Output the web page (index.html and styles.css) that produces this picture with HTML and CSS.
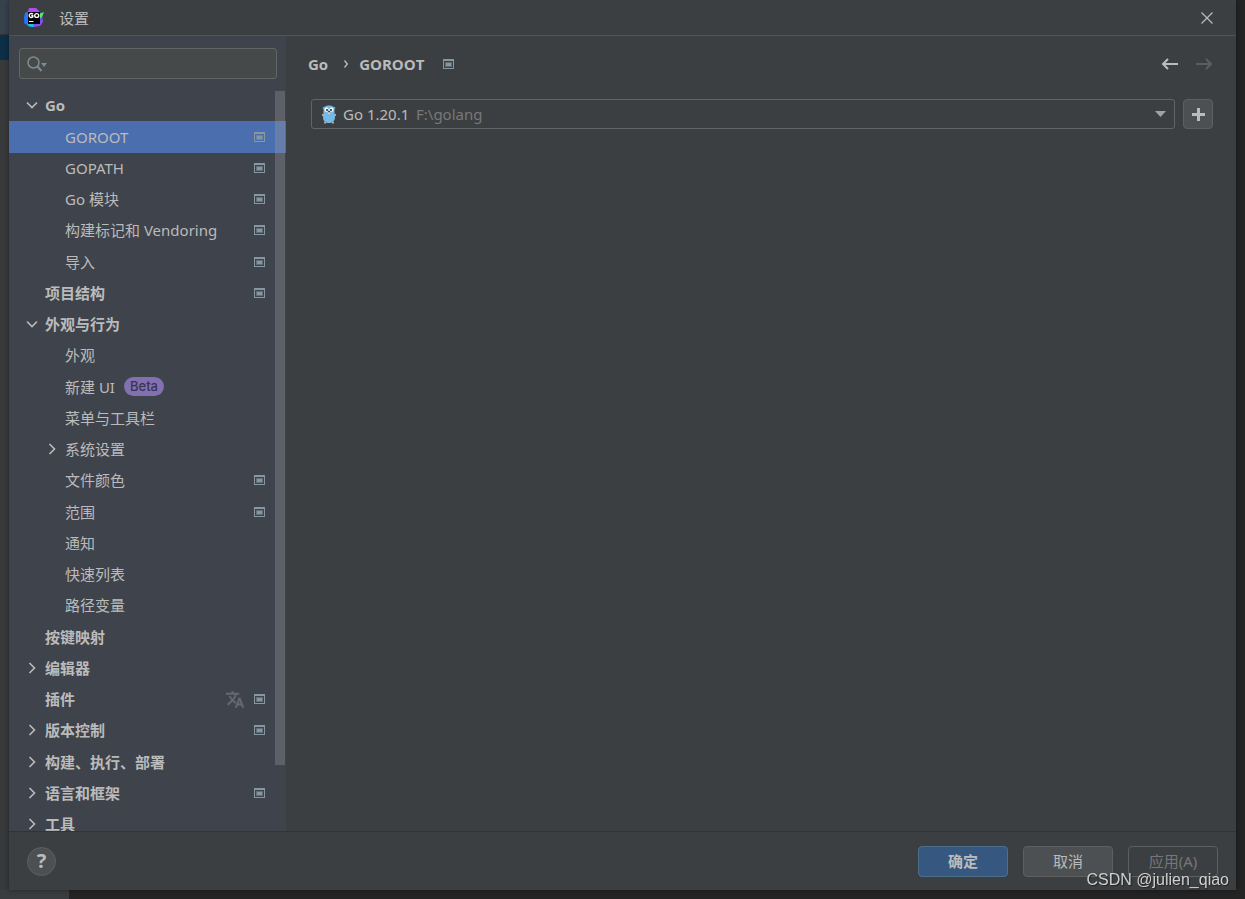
FILE: index.html
```html
<!DOCTYPE html>
<html lang="zh-CN">
<head>
<meta charset="utf-8">
<title>设置</title>
<link rel="stylesheet" href="styles.css">
</head>
<body>
<svg class="defs" aria-hidden="true">
  <symbol id="project" viewBox="0 0 11 10"><path fill="currentColor" fill-rule="evenodd" d="M0 0h11v10H0zM1 2v7h9V2z"/><path fill="currentColor" opacity=".5" d="M2 3h7v5H2z"/><path fill="currentColor" d="M3 4h5v3H3z"/></symbol>
  <symbol id="down" viewBox="0 0 12 12"><path fill="none" stroke="currentColor" stroke-width="1.600" d="M1 3.500l5 5 5-5"/></symbol>
  <symbol id="right" viewBox="0 0 12 12"><path fill="none" stroke="currentColor" stroke-width="1.600" d="M3.500 1l5 5-5 5"/></symbol>
</svg>
<div class="desktop">
  <div class="edge-left"><div class="edge-tab"></div><div class="edge-active"></div></div>
  <div class="dialog" role="dialog" aria-labelledby="title">
    <header class="titlebar">
      <svg class="app-icon" viewBox="0 0 20 20" aria-hidden="true">
        <defs><linearGradient id="g" x1="0" y1="0" x2="1" y2="1"><stop offset="0" stop-color="#2a9df4"/><stop offset=".5" stop-color="#3d5bf5"/><stop offset="1" stop-color="#b345f1"/></linearGradient></defs>
        <path fill="url(#g)" d="M1 5l5-2 9 0 3 3 1 8-3 4-6 1-6-1-4-3 1-5z"/>
        <path fill="#b04af5" d="M5 0h7l3 3-1 3H3z"/>
        <path fill="#1e7bff" d="M1 5h4v9H1L0 10z"/>
        <path fill="#11c9dc" d="M3 15h6l1 4-5-.5z"/>
        <path fill="#57f05a" d="M15 6l5-2-2 5-3 2z"/>
        <path fill="#000" d="M4 4h12v12H4z"/>
        <path fill="none" stroke="#fff" stroke-width="1.400" d="M9 6.200C7.500 5 5.200 5.600 5.200 7.500s2 2.600 3.600 1.500V7.700H7.300"/>
        <ellipse cx="12.700" cy="7.500" rx="2" ry="1.900" fill="none" stroke="#fff" stroke-width="1.400"/>
        <path fill="#fff" d="M5 13h4.500v1H5z"/>
      </svg>
      <h1 id="title" class="title">设置</h1>
      <button class="close" type="button" aria-label="关闭"><svg viewBox="0 0 12 12"><path fill="none" stroke="currentColor" stroke-width="1.200" d="M.5.500l11 11M11.500.500l-11 11"/></svg></button>
    </header>
    <div class="body">
      <aside class="sidebar">
        <label class="search">
          <svg class="search-icon" viewBox="0 0 21 16" aria-hidden="true"><circle cx="6.500" cy="6.500" r="5.500" fill="none" stroke="currentColor" stroke-width="1.500"/><path stroke="currentColor" stroke-width="2" d="M10.500 10.500l4 4.500"/><path fill="currentColor" d="M14 7h6l-3 4z"/></svg>
          <input class="search-input" type="text" aria-label="搜索设置">
        </label>
        <div class="tree-wrap">
          <ul class="tree">
            <li class="row top"><svg class="chev"><use href="#down"/></svg><button class="name" type="button">Go</button></li>
            <li class="row selected"><button class="name" type="button">GOROOT</button><svg class="proj"><use href="#project"/></svg></li>
            <li class="row"><button class="name" type="button">GOPATH</button><svg class="proj"><use href="#project"/></svg></li>
            <li class="row"><button class="name" type="button">Go 模块</button><svg class="proj"><use href="#project"/></svg></li>
            <li class="row"><button class="name" type="button">构建标记和 Vendoring</button><svg class="proj"><use href="#project"/></svg></li>
            <li class="row"><button class="name" type="button">导入</button><svg class="proj"><use href="#project"/></svg></li>
            <li class="row top"><button class="name" type="button">项目结构</button><svg class="proj"><use href="#project"/></svg></li>
            <li class="row top"><svg class="chev"><use href="#down"/></svg><button class="name" type="button">外观与行为</button></li>
            <li class="row"><button class="name" type="button">外观</button></li>
            <li class="row"><button class="name" type="button">新建 UI</button><span class="badge">Beta</span></li>
            <li class="row"><button class="name" type="button">菜单与工具栏</button></li>
            <li class="row"><svg class="chev"><use href="#right"/></svg><button class="name" type="button">系统设置</button></li>
            <li class="row"><button class="name" type="button">文件颜色</button><svg class="proj"><use href="#project"/></svg></li>
            <li class="row"><button class="name" type="button">范围</button><svg class="proj"><use href="#project"/></svg></li>
            <li class="row"><button class="name" type="button">通知</button></li>
            <li class="row"><button class="name" type="button">快速列表</button></li>
            <li class="row"><button class="name" type="button">路径变量</button></li>
            <li class="row top"><button class="name" type="button">按键映射</button></li>
            <li class="row top"><svg class="chev"><use href="#right"/></svg><button class="name" type="button">编辑器</button></li>
            <li class="row top"><button class="name" type="button">插件</button><svg class="lang" viewBox="1 2 22 20"><path fill="currentColor" stroke="currentColor" stroke-width=".6" d="M12.870 15.070l-2.540-2.510.03-.03A17.500 17.500 0 0 0 14.070 6H17V4h-7V2H8v2H1v2h11.170A15.700 15.700 0 0 1 9 11.350 15.600 15.600 0 0 1 6.690 8h-2a17.600 17.600 0 0 0 2.980 4.560l-5.090 5.020L4 19l5-5 3.110 3.110zM18.500 10h-2L12 22h2l1.120-3h4.750L21 22h2zm-2.620 7l1.620-4.330L19.120 17z"/></svg><svg class="proj"><use href="#project"/></svg></li>
            <li class="row top"><svg class="chev"><use href="#right"/></svg><button class="name" type="button">版本控制</button><svg class="proj"><use href="#project"/></svg></li>
            <li class="row top"><svg class="chev"><use href="#right"/></svg><button class="name" type="button">构建、执行、部署</button></li>
            <li class="row top"><svg class="chev"><use href="#right"/></svg><button class="name" type="button">语言和框架</button><svg class="proj"><use href="#project"/></svg></li>
            <li class="row top"><svg class="chev"><use href="#right"/></svg><button class="name" type="button">工具</button></li>
          </ul>
          <div class="thumb"></div>
        </div>
      </aside>
      <main class="content">
        <div class="heading">
          <nav class="crumbs" aria-label="位置">
            <span>Go</span>
            <svg class="crumb-sep" viewBox="0 0 4 8"><path fill="none" stroke="currentColor" stroke-width="1.300" d="M.5.500L3.300 4 .5 7.500"/></svg>
            <span>GOROOT</span>
            <svg class="crumb-proj"><use href="#project"/></svg>
          </nav>
          <button class="nav" type="button" aria-label="后退"><svg viewBox="0 0 17 12"><path fill="none" stroke="currentColor" stroke-width="2" d="M17 6H2M7 1L2 6l5 5"/></svg></button>
          <button class="nav" type="button" aria-label="前进" disabled><svg viewBox="0 0 17 12"><path fill="none" stroke="currentColor" stroke-width="2" d="M0 6h15M10 1l5 5-5 5"/></svg></button>
        </div>
        <div class="sdk">
          <div class="combo">
            <svg class="gopher" viewBox="0 0 14 19" aria-hidden="true">
              <path fill="#c9a58a" d="M0 9h2v2H0zM12 9h2v2h-2zM2 17h2v1.500H2zM10 17h2v1.500h-2z"/>
              <circle cx="2" cy="3" r="1.300" fill="#5ba3d0"/><circle cx="12" cy="3" r="1.300" fill="#5ba3d0"/>
              <path fill="#75b9e7" d="M1.500 5C1.500 1.500 4 .5 7 .5s5.500 1 5.500 4.500c0 2 0 3 .5 6.500 0 4-1.500 6.500-6 6.500S1 15.500 1 11.500c.5-3.500.5-4.500.5-6.500z"/>
              <circle cx="4.500" cy="4.700" r="2.100" fill="#fff"/><circle cx="9.500" cy="4.700" r="2.100" fill="#fff"/>
              <circle cx="5" cy="5" r="1" fill="#222"/><circle cx="9" cy="5" r="1" fill="#222"/>
              <path fill="#d5b49b" d="M5.500 7h3v1h-3z"/><path fill="#222" d="M6 6.300h2v1H6z"/><path fill="#fff" d="M6.500 7.500h1v1.500h-1z"/>
            </svg>
            <select class="sdk-select" aria-label="GOROOT"><option>Go 1.20.1</option></select>
            <span class="path">F:\golang</span>
            <svg class="arrow" viewBox="0 0 11 6"><path fill="currentColor" d="M0 0h11L5.500 6z"/></svg>
          </div>
          <button class="add" type="button" aria-label="添加"><svg viewBox="0 0 13 13"><path fill="currentColor" d="M5 0h3v5h5v3H8v5H5V8H0V5h5z"/></svg></button>
        </div>
      </main>
    </div>
    <footer class="footer">
      <button class="help" type="button" aria-label="帮助">?</button>
      <button class="btn primary" type="button">确定</button>
      <button class="btn" type="button">取消</button>
      <button class="btn" type="button" disabled>应用(A)</button>
    </footer>
  </div>
  <div class="edge-bottom"></div>
</div>
<div class="watermark">CSDN @julien_qiao</div>
</body>
</html>
```

FILE: styles.css
```css
* { box-sizing: border-box; }
body {
  margin: 0;
  background: #242424;
  color: #bbbbbb;
  font: 15px/20px "Noto Sans", "Noto Sans CJK SC", sans-serif;
}
button, input, select { font: inherit; color: inherit; }
button { padding: 0; border: 0; background: none; }
svg { display: block; flex: none; }
.defs { position: absolute; width: 0; height: 0; }

.desktop {
  display: grid;
  grid-template: 1fr 9px / 9px 1fr 9px;
  height: 100vh;
}
.edge-left { background: #37393b; }
.edge-tab { height: 35px; background: #37424d; border-bottom: 1px solid #303335; }
.edge-active { height: 25px; background: #0c2f47; }
.edge-bottom { grid-area: 2 / 1 / 3 / -1; width: 69px; background: #3a3d40; }

.dialog {
  z-index: 1;
  display: flex;
  flex-direction: column;
  min-height: 0;
  background: #3c3f41;
  box-shadow: 0 0 5px rgba(0, 0, 0, .4);
}
.titlebar {
  display: flex;
  align-items: center;
  height: 36px;
  padding: 0 23px 0 15px;
  border-bottom: 1px solid #515355;
}
.app-icon { width: 20px; height: 20px; }
.title { flex: 1; margin: 0 0 0 15px; font-size: 15px; font-weight: 400; }
.close svg { width: 12px; height: 12px; }

.body { display: flex; flex: 1; min-height: 0; }
.sidebar {
  display: flex;
  flex-direction: column;
  width: 277px;
  background: #3f434c;
}
.search {
  display: flex;
  align-items: center;
  height: 31px;
  margin: 12px 9px 11px 10px;
  padding-left: 7px;
  border: 1px solid #646464;
  border-radius: 3px;
  background: #45494a;
}
.search-icon { width: 21px; height: 16px; color: #7f8b91; }
.search-input { flex: 1; min-width: 0; border: 0; outline: 0; background: none; }

.tree-wrap { position: relative; flex: 1; min-height: 0; overflow: hidden; }
.tree { height: 100%; margin: 0; padding: 0; overflow: hidden; list-style: none; }
.row {
  display: flex;
  align-items: center;
  height: 31px;
  padding: 0 21px 1px 56px;
}
.row:nth-child(4n+2) { height: 32px; }
.row.top { padding-left: 36px; font-weight: 700; font-family: "Open Sans", "Noto Sans CJK SC", sans-serif; }
.row.selected { background: #4b6eaf; }
.chev { width: 12px; height: 12px; margin: 0 7px 0 -19px; }
.name { white-space: nowrap; }
.badge {
  margin-left: 9px;
  padding: 0 6px;
  border-radius: 10px;
  background: #8270b0;
  color: #3a3650;
  font: 500 13px/19px Inter, sans-serif;
}
.proj { width: 11px; height: 10px; margin-left: auto; color: #8797a1; }
.lang { width: 18px; height: 17px; margin-left: auto; color: #646a73; }
.lang + .proj { margin-left: 10px; }
.thumb {
  position: absolute;
  top: 1px;
  right: 1px;
  width: 10px;
  height: 91%;
  background: rgba(166, 166, 166, .3);
}

.content { flex: 1; min-width: 0; padding: 16px 23px 0 22px; }
.heading { display: flex; align-items: center; height: 24px; }
.crumbs {
  display: flex;
  align-items: center;
  flex: 1;
  font-weight: 700;
  font-family: "Open Sans", sans-serif;
}
.crumb-sep { width: 4px; height: 8px; margin: 0 11px 0 16px; }
.crumb-proj { width: 11px; height: 10px; margin-left: 19px; color: #8797a1; }
.nav svg { width: 17px; height: 12px; }
.nav { margin-right: 18px; }
.nav:disabled { margin-right: 0; color: #5c5f61; }
.sdk { display: flex; gap: 8px; margin: 23px 0 0 3px; }
.combo {
  display: flex;
  flex: 1;
  align-items: center;
  height: 30px;
  padding: 0 8px 0 10px;
  border: 1px solid #646464;
  border-radius: 3px;
}
.gopher { width: 14px; height: 19px; margin-right: 7px; }
.sdk-select { padding: 0; border: 0; outline: 0; background: none; appearance: none; }
.path { margin-left: 6px; color: #787878; }
.arrow { width: 11px; height: 6px; margin-left: auto; color: #9fa3a6; }
.add {
  display: grid;
  place-items: center;
  width: 30px;
  height: 30px;
  border: 1px solid #5e6060;
  border-radius: 4px;
  background: #4c5052;
}
.add svg { width: 13px; height: 13px; }

.footer {
  display: flex;
  align-items: center;
  gap: 15px;
  height: 59px;
  padding: 0 18px;
  border-top: 1px solid #313335;
}
.help {
  width: 29px;
  height: 29px;
  margin-right: auto;
  border: 1px solid #5e6060;
  border-radius: 50%;
  background: #4c5052;
  font: 700 20px/26px "Noto Sans", sans-serif;
}
.btn {
  width: 90px;
  height: 31px;
  border: 1px solid #5e6060;
  border-radius: 4px;
  background: #4c5052;
}
.btn.primary { border-color: #4c708c; background: #365880; font-weight: 700; }
.btn:disabled { background: none; color: #777777; }

.watermark {
  position: fixed;
  z-index: 2;
  right: 16px;
  bottom: 9px;
  color: #d0d0d0;
  font: 16px/20px "Liberation Sans", sans-serif;
  text-shadow: 1px 1px 1px #222;
}
```
